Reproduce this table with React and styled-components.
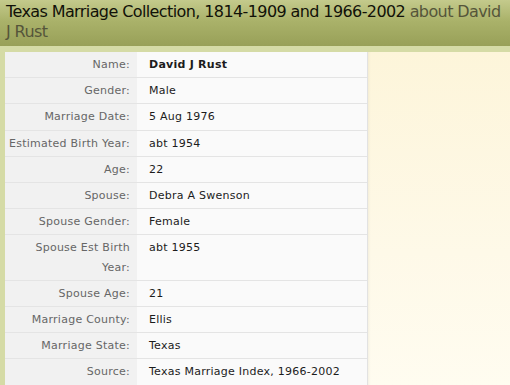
import React from 'react'
import styled, { createGlobalStyle } from 'styled-components'

const Global = createGlobalStyle`
  html, body { margin: 0; padding: 0; }
  body {
    width: 510px;
    height: 385px;
    overflow: hidden;
    background: #fdf6dc;
    font-family: "DejaVu Sans", Verdana, sans-serif;
  }
`

const Page = styled.div`
  display: flex;
  flex-direction: column;
  height: 385px;
`

const Header = styled.h1`
  margin: 0;
  padding: 2px 6px 4px 6px;
  font-weight: normal;
  font-size: 16px;
  line-height: 20px;
  letter-spacing: -0.6px;
  color: #111108;
  background: linear-gradient(#c4ca8c, #aab26a 45%, #98a058);
`

const About = styled.span`
  color: #55553a;
`

const Body = styled.div`
  flex: 1;
  display: grid;
  grid-template-columns: 363px 1fr;
  padding: 6px 0 0 5px;
  background: #d5dba6;
`

const Table = styled.div`
  display: grid;
  grid-template-columns: 132px 1fr;
  align-content: start;
  background: #fafafa;
  border-right: 1px solid #e2e2e2;
  font-size: 11px;
  line-height: 19.2px;
  letter-spacing: 0.25px;
`

const Label = styled.div`
  padding: 3px 7px 3px 2px;
  text-align: right;
  color: #666;
  background: #f1f1f1;
  border-bottom: 1px solid #e4e4e4;
`

const Value = styled.div`
  padding: 3px 8px 3px 12px;
  color: #1c1c1c;
  font-weight: ${p => (p.$bold ? 'bold' : 'normal')};
  border-bottom: 1px solid #e4e4e4;
`

const Side = styled.div`
  background: linear-gradient(#fdf5da, #fef9e8 60%, #fffcf0);
  box-shadow: inset 3px 0 3px -2px rgba(0, 0, 0, 0.05);
`

const rows = [
  ['Name:', 'David J Rust', true],
  ['Gender:', 'Male'],
  ['Marriage Date:', '5 Aug 1976'],
  ['Estimated Birth Year:', 'abt 1954'],
  ['Age:', '22'],
  ['Spouse:', 'Debra A Swenson'],
  ['Spouse Gender:', 'Female'],
  ['Spouse Est Birth Year:', 'abt 1955'],
  ['Spouse Age:', '21'],
  ['Marriage County:', 'Ellis'],
  ['Marriage State:', 'Texas'],
  ['Source:', 'Texas Marriage Index, 1966-2002'],
]

const App = () => (
  <Page>
    <Global />
    <Header>
      Texas Marriage Collection, 1814-1909 and 1966-2002 <About>about David J Rust</About>
    </Header>
    <Body>
      <Table>
        {rows.map(([label, value, bold]) => (
          <React.Fragment key={label}>
            <Label>{label}</Label>
            <Value $bold={bold}>{value}</Value>
          </React.Fragment>
        ))}
      </Table>
      <Side />
    </Body>
  </Page>
)

export default App
